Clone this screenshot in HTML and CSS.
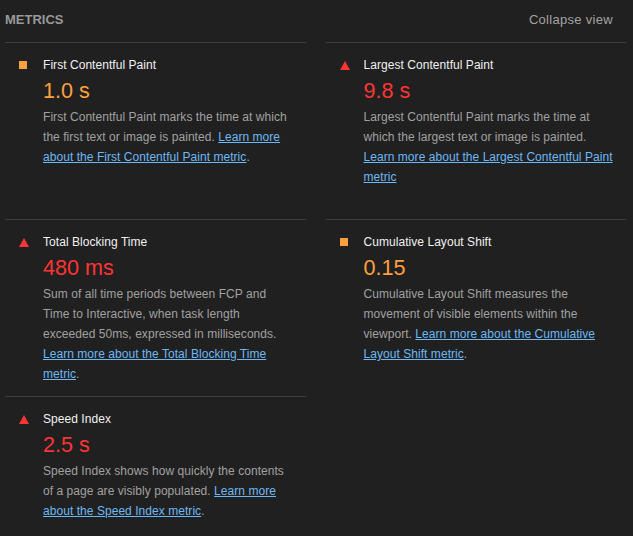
FILE: index.html
```html
<!DOCTYPE html>
<html lang="en">
<head>
<meta charset="utf-8">
<title>Metrics</title>
<link rel="stylesheet" href="styles.css">
</head>
<body>
<div class="header">
  <span class="header__title">METRICS</span>
  <span class="header__toggle">Collapse view</span>
</div>
<div class="metrics">
  <div class="metric">
    <div class="metric__inner">
      <span class="icon icon--average"></span>
      <span class="metric__title">First Contentful Paint</span>
      <div class="metric__value value--average">1.0&nbsp;s</div>
      <div class="metric__desc">First Contentful Paint marks the time at which the first text or image is painted. <a href="#">Learn more about the First Contentful Paint metric</a>.</div>
    </div>
  </div>
  <div class="metric">
    <div class="metric__inner">
      <span class="icon icon--fail"></span>
      <span class="metric__title">Largest Contentful Paint</span>
      <div class="metric__value value--fail">9.8&nbsp;s</div>
      <div class="metric__desc">Largest Contentful Paint marks the time at which the largest text or image is painted. <a href="#">Learn more about the Largest Contentful Paint metric</a></div>
    </div>
  </div>
  <div class="metric">
    <div class="metric__inner">
      <span class="icon icon--fail"></span>
      <span class="metric__title">Total Blocking Time</span>
      <div class="metric__value value--fail">480&nbsp;ms</div>
      <div class="metric__desc">Sum of all time periods between FCP and Time to Interactive, when task length exceeded 50ms, expressed in milliseconds. <a href="#">Learn more about the Total Blocking Time metric</a>.</div>
    </div>
  </div>
  <div class="metric">
    <div class="metric__inner">
      <span class="icon icon--average"></span>
      <span class="metric__title">Cumulative Layout Shift</span>
      <div class="metric__value value--average">0.15</div>
      <div class="metric__desc">Cumulative Layout Shift measures the movement of visible elements within the viewport. <a href="#">Learn more about the Cumulative Layout Shift metric</a>.</div>
    </div>
  </div>
  <div class="metric">
    <div class="metric__inner">
      <span class="icon icon--fail"></span>
      <span class="metric__title">Speed Index</span>
      <div class="metric__value value--fail">2.5&nbsp;s</div>
      <div class="metric__desc">Speed Index shows how quickly the contents of a page are visibly populated. <a href="#">Learn more about the Speed Index metric</a>.</div>
    </div>
  </div>
</div>
</body>
</html>
```

FILE: styles.css
```css
html, body {
  margin: 0;
  padding: 0;
  background: #202020;
}

body {
  font-family: "Liberation Sans", Arial, Helvetica, sans-serif;
  color: #e8e8e8;
  font-size: 12px;
  line-height: 20px;
}

.header {
  display: flex;
  justify-content: space-between;
  align-items: center;
  padding: 10px 20px 0 5px;
  height: 20px;
  margin-bottom: 12px;
}

.header__title {
  font-size: 13px;
  font-weight: bold;
  color: #999999;
  line-height: 20px;
}

.header__toggle {
  font-size: 13px;
  letter-spacing: 0.3px;
  color: #a3a3a3;
  line-height: 20px;
}

.metrics {
  display: grid;
  grid-template-columns: 1fr 1fr;
  grid-auto-rows: 1fr;
  column-gap: 20px;
  margin: 0 7px 0 5px;
}

.metric {
  border-top: 1px solid #3d3d3d;
}

.metric__inner {
  display: grid;
  grid-template-columns: 26px 1fr;
  align-items: center;
  padding: 12px;
}

.icon {
  display: block;
  margin-left: 2px;
}

.icon--average {
  width: 8px;
  height: 8px;
  background: #ffa040;
}

.icon--fail {
  width: 0;
  height: 0;
  border-left: 5px solid transparent;
  border-right: 5px solid transparent;
  border-bottom: 9px solid #ff3434;
}

.metric__title {
  color: #f0f0f0;
  line-height: 20px;
  letter-spacing: 0.05px;
}

.metric__value {
  grid-column: 2;
  font-size: 21.6px;
  line-height: 20px;
  margin: 6px 0;
  white-space: nowrap;
}

.value--average {
  color: #ffa040;
}

.value--fail {
  color: #ff3434;
}

.metric__desc {
  grid-column: 2;
  color: #a0a0a0;
  line-height: 20px;
  letter-spacing: 0.05px;
}

.metric__desc a {
  color: #6cb8f5;
  text-decoration: underline;
}
```
